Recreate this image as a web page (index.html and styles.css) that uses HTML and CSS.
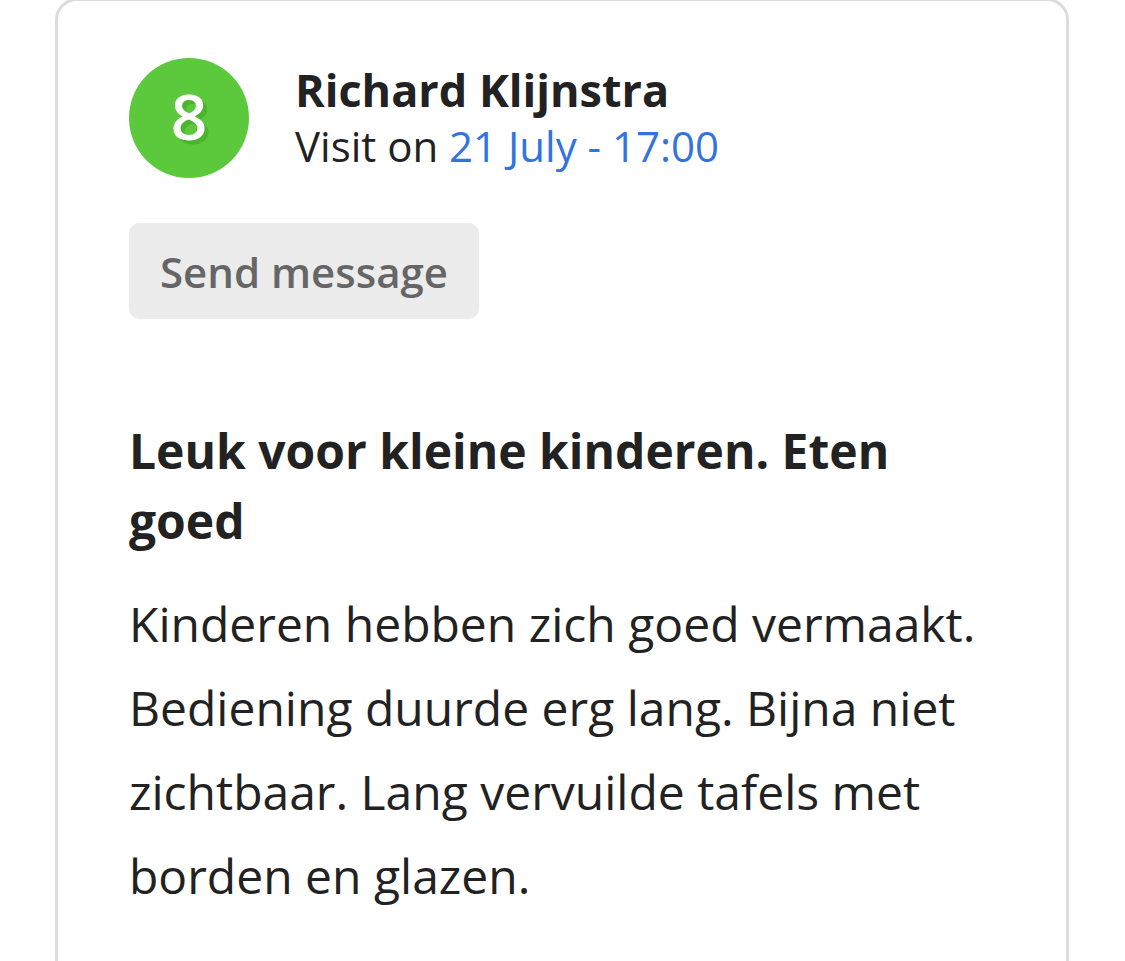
FILE: index.html
```html
<!DOCTYPE html>
<html lang="en">
<head>
    <meta charset="UTF-8">
    <meta name="viewport" content="width=device-width, initial-scale=1.0">
    <title>Review</title>
    <link rel="stylesheet" href="styles.css">
</head>
<body>
    <div class="card">
        <div class="reviewer">
            <div class="score"><span>8</span></div>
            <div class="who">
                <div class="name">Richard Klijnstra</div>
                <div class="visit">Visit on <span class="date">21 July - 17:00</span></div>
            </div>
        </div>

        <button class="send">Send message</button>

        <h2 class="title">Leuk voor kleine kinderen. Eten goed</h2>
        <p class="text">Kinderen hebben zich goed vermaakt. Bediening duurde erg lang. Bijna niet zichtbaar. Lang vervuilde tafels met borden en glazen.</p>
    </div>
</body>
</html>
```

FILE: styles.css
```css
body {
    font-family: 'Open Sans', sans-serif;
    background-color: #fff;
    color: #222;
    margin: 0;
    padding: 0;
    overflow: hidden;
}

.card {
    margin: -2px 0 0 55px;
    width: 1014px;
    height: 1000px;
    box-sizing: border-box;
    border: 3px solid #dcdcdc;
    border-radius: 22px;
    padding: 57px 70px 0 71px;
}

.reviewer {
    display: flex;
    align-items: center;
    gap: 46px;
}

.score {
    flex: none;
    width: 120px;
    height: 120px;
    border-radius: 50%;
    background-color: #5cc93c;
    display: flex;
    align-items: center;
    justify-content: center;
}

.score span {
    color: #fff;
    font-size: 64px;
    font-weight: 600;
    line-height: 1;
    margin-top: -4px;
    text-shadow: 4px 4px 0 #4bb52e;
}

.name {
    font-size: 45px;
    font-weight: 700;
    line-height: 56px;
}

.visit {
    font-size: 42px;
    line-height: 56px;
}

.date {
    color: #3273e0;
}

.send {
    display: block;
    margin-top: 45px;
    background-color: #ececec;
    color: #666;
    font-family: 'Open Sans', sans-serif;
    font-size: 42px;
    font-weight: 600;
    padding: 0 31px;
    height: 96px;
    border: none;
    border-radius: 10px;
}

.title {
    margin: 97px 0 0;
    font-size: 48px;
    font-weight: 700;
    line-height: 70px;
}

.text {
    margin: 26px 0 0;
    font-size: 48px;
    line-height: 84px;
}
```
